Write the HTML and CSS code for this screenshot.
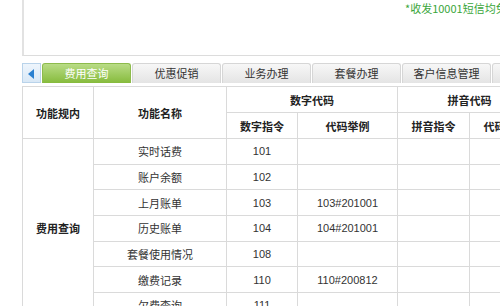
FILE: index.html
```html
<!DOCTYPE html>
<html lang="zh-CN">
<head>
    <meta charset="utf-8">
    <title>功能指令</title>
    <link rel="stylesheet" href="styles.css">
</head>
<body>
    <div class="page">
        <div class="notice-box">
            <p class="notice">*收发10001短信均免费</p>
        </div>
        <div class="tabs">
            <span class="tab-arrow"></span>
            <span class="tab active">费用查询</span>
            <span class="tab">优惠促销</span>
            <span class="tab">业务办理</span>
            <span class="tab">套餐办理</span>
            <span class="tab">客户信息管理</span>
            <span class="tab">其他</span>
        </div>
        <table class="codes">
            <colgroup>
                <col class="c1"><col class="c2"><col class="c3"><col class="c4"><col class="c5"><col class="c6">
            </colgroup>
            <tr class="head">
                <th rowspan="2">功能规内</th>
                <th rowspan="2">功能名称</th>
                <th colspan="2">数字代码</th>
                <th colspan="2">拼音代码</th>
            </tr>
            <tr class="head">
                <th>数字指令</th>
                <th>代码举例</th>
                <th>拼音指令</th>
                <th>代码举例</th>
            </tr>
            <tr>
                <th rowspan="7">费用查询</th>
                <td>实时话费</td><td class="num">101</td><td class="num"></td><td></td><td></td>
            </tr>
            <tr><td>账户余额</td><td class="num">102</td><td class="num"></td><td></td><td></td></tr>
            <tr><td>上月账单</td><td class="num">103</td><td class="num">103#201001</td><td></td><td></td></tr>
            <tr><td>历史账单</td><td class="num">104</td><td class="num">104#201001</td><td></td><td></td></tr>
            <tr><td>套餐使用情况</td><td class="num">108</td><td class="num"></td><td></td><td></td></tr>
            <tr><td>缴费记录</td><td class="num">110</td><td class="num">110#200812</td><td></td><td></td></tr>
            <tr><td>欠费查询</td><td class="num">111</td><td class="num"></td><td></td><td></td></tr>
        </table>
    </div>
</body>
</html>
```

FILE: styles.css
```css
body {
    margin: 0;
    overflow: hidden;
    background-color: #ffffff;
    font-family: "Noto Sans CJK SC", sans-serif;
    font-size: 11px;
    color: #333;
}
.page {
    padding-left: 22px;
    width: 620px;
}
.notice-box {
    height: 56px;
    border-left: 2px solid #e2e2e2;
    border-bottom: 1px solid #dcdcdc;
    box-sizing: border-box;
}
.notice {
    margin: 0;
    padding: 1px 0 0 381px;
    color: #3aa63a;
    font-size: 11px;
    line-height: 14px;
}
.tabs {
    display: flex;
    gap: 1px;
    margin-top: 7px;
    height: 20px;
}
.tab-arrow {
    width: 17px;
    flex: none;
    border: 1px solid #b9d3ea;
    background: linear-gradient(#eef5fc, #d9e8f6);
    position: relative;
}
.tab-arrow::after {
    content: "";
    position: absolute;
    left: 5px;
    top: 5px;
    border-style: solid;
    border-width: 5px 6px 5px 0;
    border-color: transparent #2a80d0 transparent transparent;
}
.tab {
    width: 87px;
    flex: none;
    border: 1px solid #d6d6d6;
    border-bottom: none;
    border-radius: 3px 3px 0 0;
    background: linear-gradient(#f7f7f7, #e4e4e4);
    text-align: center;
    line-height: 19px;
    font-size: 11px;
    color: #333;
}
.tab.active {
    border-color: #8dbb4c;
    background: linear-gradient(#b9dc86, #86bb3c);
    color: #ffffff;
}
.codes {
    margin-top: 3px;
    border-collapse: collapse;
    table-layout: fixed;
    width: 520px;
}
.c1 { width: 71px; }
.c2 { width: 133px; }
.c3 { width: 71px; }
.c4 { width: 100px; }
.c5 { width: 72px; }
.c6 { width: 72px; }
.codes th,
.codes td {
    border: 1px solid #dadada;
    padding: 0;
    text-align: center;
    font-size: 11px;
    white-space: nowrap;
    overflow: hidden;
}
.codes th {
    font-weight: bold;
    color: #222;
}
.codes tr {
    height: 25.67px;
}
.codes tr.head {
    height: 26px;
}
.codes td.num {
    font-family: "Liberation Sans", sans-serif;
    font-size: 11px;
    color: #333;
}
```
